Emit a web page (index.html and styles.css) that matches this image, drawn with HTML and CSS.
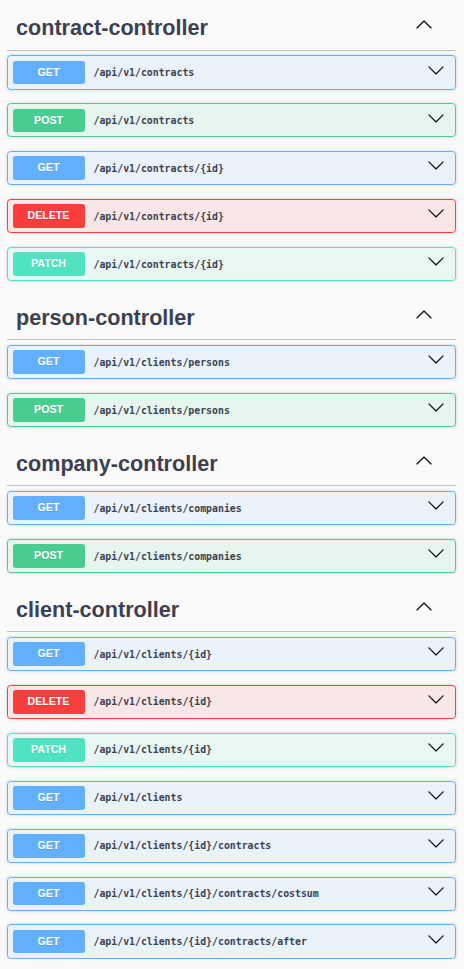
FILE: index.html
```html
<!DOCTYPE html>
<html lang="en">
<head>
<meta charset="utf-8">
<title>Swagger UI</title>
<link rel="stylesheet" href="styles.css">
</head>
<body>
<div class="wrapper">
  <section class="tag-section">
    <h3 class="tag"><span class="tag-name">contract-controller</span><svg class="arrow-up" viewBox="0 0 20 20"><path d="M17.418 14.908c.272.268.709.268.979 0s.271-.701 0-.969l-7.908-7.83c-.27-.268-.707-.268-.979 0l-7.908 7.83c-.27.268-.27.701 0 .969.271.268.709.268.979 0L10 7.767l7.418 7.141z"/></svg></h3>
    <div class="opblock get"><div class="summary"><span class="method">GET</span><span class="path">/api/v1/contracts</span><svg class="arrow-down" viewBox="0 0 20 20"><path d="M17.418 6.109c.272-.268.709-.268.979 0s.271.701 0 .969l-7.908 7.83c-.27.268-.707.268-.979 0l-7.908-7.83c-.27-.268-.27-.701 0-.969.271-.268.709-.268.979 0L10 13.25l7.418-7.141z"/></svg></div></div>
    <div class="opblock post"><div class="summary"><span class="method">POST</span><span class="path">/api/v1/contracts</span><svg class="arrow-down" viewBox="0 0 20 20"><path d="M17.418 6.109c.272-.268.709-.268.979 0s.271.701 0 .969l-7.908 7.83c-.27.268-.707.268-.979 0l-7.908-7.83c-.27-.268-.27-.701 0-.969.271-.268.709-.268.979 0L10 13.25l7.418-7.141z"/></svg></div></div>
    <div class="opblock get"><div class="summary"><span class="method">GET</span><span class="path">/api/v1/contracts/{id}</span><svg class="arrow-down" viewBox="0 0 20 20"><path d="M17.418 6.109c.272-.268.709-.268.979 0s.271.701 0 .969l-7.908 7.83c-.27.268-.707.268-.979 0l-7.908-7.83c-.27-.268-.27-.701 0-.969.271-.268.709-.268.979 0L10 13.25l7.418-7.141z"/></svg></div></div>
    <div class="opblock delete"><div class="summary"><span class="method">DELETE</span><span class="path">/api/v1/contracts/{id}</span><svg class="arrow-down" viewBox="0 0 20 20"><path d="M17.418 6.109c.272-.268.709-.268.979 0s.271.701 0 .969l-7.908 7.83c-.27.268-.707.268-.979 0l-7.908-7.83c-.27-.268-.27-.701 0-.969.271-.268.709-.268.979 0L10 13.25l7.418-7.141z"/></svg></div></div>
    <div class="opblock patch"><div class="summary"><span class="method">PATCH</span><span class="path">/api/v1/contracts/{id}</span><svg class="arrow-down" viewBox="0 0 20 20"><path d="M17.418 6.109c.272-.268.709-.268.979 0s.271.701 0 .969l-7.908 7.83c-.27.268-.707.268-.979 0l-7.908-7.83c-.27-.268-.27-.701 0-.969.271-.268.709-.268.979 0L10 13.25l7.418-7.141z"/></svg></div></div>
  </section>
  <section class="tag-section">
    <h3 class="tag"><span class="tag-name">person-controller</span><svg class="arrow-up" viewBox="0 0 20 20"><path d="M17.418 14.908c.272.268.709.268.979 0s.271-.701 0-.969l-7.908-7.83c-.27-.268-.707-.268-.979 0l-7.908 7.83c-.27.268-.27.701 0 .969.271.268.709.268.979 0L10 7.767l7.418 7.141z"/></svg></h3>
    <div class="opblock get"><div class="summary"><span class="method">GET</span><span class="path">/api/v1/clients/persons</span><svg class="arrow-down" viewBox="0 0 20 20"><path d="M17.418 6.109c.272-.268.709-.268.979 0s.271.701 0 .969l-7.908 7.83c-.27.268-.707.268-.979 0l-7.908-7.83c-.27-.268-.27-.701 0-.969.271-.268.709-.268.979 0L10 13.25l7.418-7.141z"/></svg></div></div>
    <div class="opblock post"><div class="summary"><span class="method">POST</span><span class="path">/api/v1/clients/persons</span><svg class="arrow-down" viewBox="0 0 20 20"><path d="M17.418 6.109c.272-.268.709-.268.979 0s.271.701 0 .969l-7.908 7.83c-.27.268-.707.268-.979 0l-7.908-7.83c-.27-.268-.27-.701 0-.969.271-.268.709-.268.979 0L10 13.25l7.418-7.141z"/></svg></div></div>
  </section>
  <section class="tag-section">
    <h3 class="tag"><span class="tag-name">company-controller</span><svg class="arrow-up" viewBox="0 0 20 20"><path d="M17.418 14.908c.272.268.709.268.979 0s.271-.701 0-.969l-7.908-7.83c-.27-.268-.707-.268-.979 0l-7.908 7.83c-.27.268-.27.701 0 .969.271.268.709.268.979 0L10 7.767l7.418 7.141z"/></svg></h3>
    <div class="opblock get"><div class="summary"><span class="method">GET</span><span class="path">/api/v1/clients/companies</span><svg class="arrow-down" viewBox="0 0 20 20"><path d="M17.418 6.109c.272-.268.709-.268.979 0s.271.701 0 .969l-7.908 7.83c-.27.268-.707.268-.979 0l-7.908-7.83c-.27-.268-.27-.701 0-.969.271-.268.709-.268.979 0L10 13.25l7.418-7.141z"/></svg></div></div>
    <div class="opblock post"><div class="summary"><span class="method">POST</span><span class="path">/api/v1/clients/companies</span><svg class="arrow-down" viewBox="0 0 20 20"><path d="M17.418 6.109c.272-.268.709-.268.979 0s.271.701 0 .969l-7.908 7.83c-.27.268-.707.268-.979 0l-7.908-7.83c-.27-.268-.27-.701 0-.969.271-.268.709-.268.979 0L10 13.25l7.418-7.141z"/></svg></div></div>
  </section>
  <section class="tag-section">
    <h3 class="tag"><span class="tag-name">client-controller</span><svg class="arrow-up" viewBox="0 0 20 20"><path d="M17.418 14.908c.272.268.709.268.979 0s.271-.701 0-.969l-7.908-7.83c-.27-.268-.707-.268-.979 0l-7.908 7.83c-.27.268-.27.701 0 .969.271.268.709.268.979 0L10 7.767l7.418 7.141z"/></svg></h3>
    <div class="opblock get"><div class="summary"><span class="method">GET</span><span class="path">/api/v1/clients/{id}</span><svg class="arrow-down" viewBox="0 0 20 20"><path d="M17.418 6.109c.272-.268.709-.268.979 0s.271.701 0 .969l-7.908 7.83c-.27.268-.707.268-.979 0l-7.908-7.83c-.27-.268-.27-.701 0-.969.271-.268.709-.268.979 0L10 13.25l7.418-7.141z"/></svg></div></div>
    <div class="opblock delete"><div class="summary"><span class="method">DELETE</span><span class="path">/api/v1/clients/{id}</span><svg class="arrow-down" viewBox="0 0 20 20"><path d="M17.418 6.109c.272-.268.709-.268.979 0s.271.701 0 .969l-7.908 7.83c-.27.268-.707.268-.979 0l-7.908-7.83c-.27-.268-.27-.701 0-.969.271-.268.709-.268.979 0L10 13.25l7.418-7.141z"/></svg></div></div>
    <div class="opblock patch"><div class="summary"><span class="method">PATCH</span><span class="path">/api/v1/clients/{id}</span><svg class="arrow-down" viewBox="0 0 20 20"><path d="M17.418 6.109c.272-.268.709-.268.979 0s.271.701 0 .969l-7.908 7.83c-.27.268-.707.268-.979 0l-7.908-7.83c-.27-.268-.27-.701 0-.969.271-.268.709-.268.979 0L10 13.25l7.418-7.141z"/></svg></div></div>
    <div class="opblock get"><div class="summary"><span class="method">GET</span><span class="path">/api/v1/clients</span><svg class="arrow-down" viewBox="0 0 20 20"><path d="M17.418 6.109c.272-.268.709-.268.979 0s.271.701 0 .969l-7.908 7.83c-.27.268-.707.268-.979 0l-7.908-7.83c-.27-.268-.27-.701 0-.969.271-.268.709-.268.979 0L10 13.25l7.418-7.141z"/></svg></div></div>
    <div class="opblock get"><div class="summary"><span class="method">GET</span><span class="path">/api/v1/clients/{id}/contracts</span><svg class="arrow-down" viewBox="0 0 20 20"><path d="M17.418 6.109c.272-.268.709-.268.979 0s.271.701 0 .969l-7.908 7.83c-.27.268-.707.268-.979 0l-7.908-7.83c-.27-.268-.27-.701 0-.969.271-.268.709-.268.979 0L10 13.25l7.418-7.141z"/></svg></div></div>
    <div class="opblock get"><div class="summary"><span class="method">GET</span><span class="path">/api/v1/clients/{id}/contracts/costsum</span><svg class="arrow-down" viewBox="0 0 20 20"><path d="M17.418 6.109c.272-.268.709-.268.979 0s.271.701 0 .969l-7.908 7.83c-.27.268-.707.268-.979 0l-7.908-7.83c-.27-.268-.27-.701 0-.969.271-.268.709-.268.979 0L10 13.25l7.418-7.141z"/></svg></div></div>
    <div class="opblock get"><div class="summary"><span class="method">GET</span><span class="path">/api/v1/clients/{id}/contracts/after</span><svg class="arrow-down" viewBox="0 0 20 20"><path d="M17.418 6.109c.272-.268.709-.268.979 0s.271.701 0 .969l-7.908 7.83c-.27.268-.707.268-.979 0l-7.908-7.83c-.27-.268-.27-.701 0-.969.271-.268.709-.268.979 0L10 13.25l7.418-7.141z"/></svg></div></div>
  </section>
</div>
</body>
</html>
```
FILE: styles.css
```css
html, body {
  margin: 0;
  padding: 0;
  background: #fafafa;
}

.wrapper {
  padding: 5px 8px 0 7px;
  font-family: "Liberation Sans", Arial, sans-serif;
  color: #3b4151;
}

.tag-section {
  display: flex;
  flex-direction: column;
}

.tag {
  display: flex;
  align-items: center;
  justify-content: space-between;
  height: 44.6px;
  margin: 0 0 4.5px;
  padding: 0 23.4px 0 9px;
  border-bottom: 1px solid rgba(59, 65, 81, 0.3);
  font-size: 21.6px;
  font-weight: 700;
  color: #3b4151;
}

.tag-name {
  line-height: 1.2;
  margin-top: 1px;
}

.arrow-up {
  width: 18px;
  height: 18px;
  margin-bottom: 6px;
  fill: #111;
}

.opblock {
  margin: 0 0 13.5px;
  border: 1px solid #000;
  border-radius: 3.6px;
  box-shadow: 0 0 3px rgba(0, 0, 0, 0.19);
}

.tag-section:last-child .opblock:last-child {
  margin-bottom: 0;
}

.summary {
  display: flex;
  align-items: center;
  padding: 4.5px;
}

.method {
  flex: none;
  width: 72px;
  height: 23.45px;
  line-height: 23.45px;
  border-radius: 2.7px;
  text-align: center;
  font-family: "Liberation Sans", Arial, sans-serif;
  font-size: 10.6px;
  font-weight: 700;
  color: #fff;
  text-shadow: 0 1px 0 rgba(0, 0, 0, 0.1);
}

.path {
  flex: 1;
  padding: 0 9px;
  font-family: "DejaVu Sans Mono", "Liberation Mono", monospace;
  font-size: 9.85px;
  font-weight: 600;
  color: #3b4151;
  white-space: nowrap;
}

.arrow-down {
  flex: none;
  align-self: flex-start;
  width: 18px;
  height: 18px;
  margin-right: 5.9px;
  fill: #111;
}

.get { border-color: #61affe; background: rgba(97, 175, 254, 0.1); }
.get .method { background: #61affe; }

.post { border-color: #49cc90; background: rgba(73, 204, 144, 0.1); }
.post .method { background: #49cc90; }

.delete { border-color: #f93e3e; background: rgba(249, 62, 62, 0.1); }
.delete .method { background: #f93e3e; }

.patch { border-color: #50e3c2; background: rgba(80, 227, 194, 0.1); }
.patch .method { background: #50e3c2; }
```
